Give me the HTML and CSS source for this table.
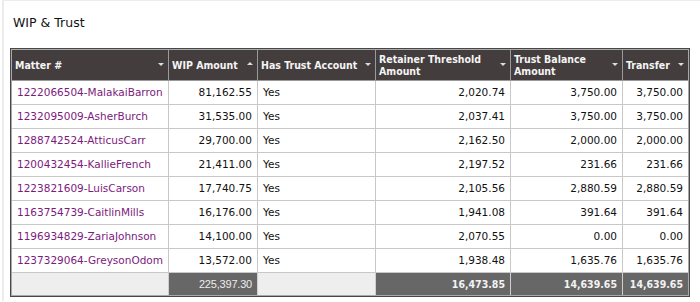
FILE: index.html
```html
<!DOCTYPE html>
<html>
<head>
<meta charset="utf-8">
<title>WIP &amp; Trust</title>
<link rel="stylesheet" href="styles.css">
</head>
<body>
<div class="panel">
  <h2 class="title">WIP &amp; Trust</h2>
  <div class="grid">
    <table>
      <colgroup>
        <col class="c-matter"><col class="c-wip"><col class="c-has"><col class="c-ret"><col class="c-bal"><col class="c-tr">
      </colgroup>
      <thead>
        <tr>
          <th class="sort desc">Matter #</th>
          <th class="sort asc">WIP Amount</th>
          <th class="sort desc">Has Trust Account</th>
          <th class="sort desc">Retainer Threshold Amount</th>
          <th class="sort desc">Trust Balance Amount</th>
          <th class="sort desc">Transfer</th>
        </tr>
      </thead>
      <tbody>
        <tr><td><a href="#">1222066504-MalakaiBarron</a></td><td class="num">81,162.55</td><td>Yes</td><td class="num">2,020.74</td><td class="num">3,750.00</td><td class="num">3,750.00</td></tr>
        <tr><td><a href="#">1232095009-AsherBurch</a></td><td class="num">31,535.00</td><td>Yes</td><td class="num">2,037.41</td><td class="num">3,750.00</td><td class="num">3,750.00</td></tr>
        <tr><td><a href="#">1288742524-AtticusCarr</a></td><td class="num">29,700.00</td><td>Yes</td><td class="num">2,162.50</td><td class="num">2,000.00</td><td class="num">2,000.00</td></tr>
        <tr><td><a href="#">1200432454-KallieFrench</a></td><td class="num">21,411.00</td><td>Yes</td><td class="num">2,197.52</td><td class="num">231.66</td><td class="num">231.66</td></tr>
        <tr><td><a href="#">1223821609-LuisCarson</a></td><td class="num">17,740.75</td><td>Yes</td><td class="num">2,105.56</td><td class="num">2,880.59</td><td class="num">2,880.59</td></tr>
        <tr><td><a href="#">1163754739-CaitlinMills</a></td><td class="num">16,176.00</td><td>Yes</td><td class="num">1,941.08</td><td class="num">391.64</td><td class="num">391.64</td></tr>
        <tr><td><a href="#">1196934829-ZariaJohnson</a></td><td class="num">14,100.00</td><td>Yes</td><td class="num">2,070.55</td><td class="num">0.00</td><td class="num">0.00</td></tr>
        <tr><td><a href="#">1237329064-GreysonOdom</a></td><td class="num">13,572.00</td><td>Yes</td><td class="num">1,938.48</td><td class="num">1,635.76</td><td class="num">1,635.76</td></tr>
      </tbody>
      <tfoot>
        <tr>
          <td class="blank"></td>
          <td class="total thin">225,397.30</td>
          <td class="blank"></td>
          <td class="total">16,473.85</td>
          <td class="total">14,639.65</td>
          <td class="total">14,639.65</td>
        </tr>
      </tfoot>
    </table>
  </div>
</div>
</body>
</html>
```

FILE: styles.css
```css
html, body {
  margin: 0;
  padding: 0;
  background: #ffffff;
}

body {
  font-family: "DejaVu Sans", Verdana, sans-serif;
  color: #111;
}

.panel {
  margin-left: 2px;
  border-left: 2px solid #ececec;
  border-top: 1px solid #ececec;
  height: 301px;
  box-sizing: border-box;
  padding: 0 10px 0 6px;
}

.title {
  margin: 0;
  padding: 14px 0 0 3px;
  font-size: 12.5px;
  line-height: 15px;
  font-weight: normal;
  color: #111;
}

.grid {
  margin-top: 18px;
  border: 1px solid #474747;
  padding: 1px;
  background: #a9a9a9;
  width: 676px;
}

table {
  width: 676px;
  table-layout: fixed;
  border-collapse: separate;
  border-spacing: 0;
}

.c-matter { width: 157px; }
.c-wip { width: 89px; }
.c-has { width: 118px; }
.c-ret { width: 135px; }
.c-bal { width: 112px; }
.c-tr { width: 65px; }

th, td {
  box-sizing: border-box;
  white-space: normal;
  overflow: hidden;
}

th {
  position: relative;
  height: 31px;
  padding: 0 14px 0 3px;
  background: #443d3d;
  color: #f4f4f4;
  text-align: left;
  vertical-align: middle;
  font-family: "DejaVu Sans Condensed", "DejaVu Sans", sans-serif;
  font-weight: bold;
  font-size: 10.5px;
  line-height: 12px;
  border-right: 1px solid #9a9a9a;
  border-bottom: 1px solid #9a9a9a;
}

th:last-child,
td:last-child {
  border-right: none;
}

.sort::after {
  content: "";
  position: absolute;
  right: 4px;
  top: 50%;
  margin-top: -2px;
  border-left: 3px solid transparent;
  border-right: 3px solid transparent;
}

.desc::after {
  border-top: 3px solid #dcdcdc;
}

.asc::after {
  border-bottom: 3px solid #dcdcdc;
  margin-top: -3px;
}

tbody td {
  height: 24px;
  padding: 0 5px;
  background: #ffffff;
  font-size: 10.5px;
  line-height: 13px;
  vertical-align: middle;
  border-right: 1px solid #c8c8c8;
  border-bottom: 1px solid #c8c8c8;
  white-space: nowrap;
}

tbody td a {
  color: #7d1a7d;
  text-decoration: none;
}

.num {
  text-align: right;
}

tfoot td {
  height: 22px;
  padding: 0 5px;
  vertical-align: middle;
  border-right: 1px solid #cfcfcf;
  white-space: nowrap;
}

.blank {
  background: #eeeeee;
}

.total {
  background: #676767;
  color: #f3f3f3;
  text-align: right;
  font-family: "DejaVu Sans Condensed", "DejaVu Sans", sans-serif;
  font-weight: bold;
  font-size: 10.5px;
}

.total.thin {
  font-family: "Liberation Sans", Arial, sans-serif;
  font-weight: normal;
  font-size: 11px;
  color: #ececec;
  letter-spacing: -0.2px;
}
```
